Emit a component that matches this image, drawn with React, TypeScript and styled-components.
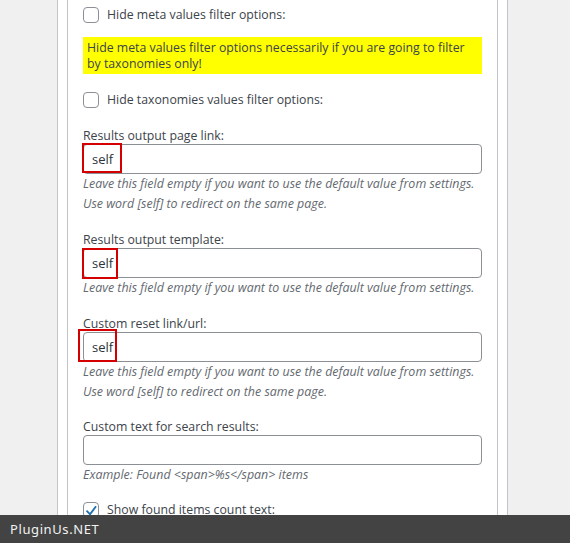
import React from "react";
import styled, { createGlobalStyle } from "styled-components";

const GlobalStyle = createGlobalStyle`
  html, body {
    margin: 0;
    padding: 0;
    background: #f0f0f1;
    overflow: hidden;
  }
  body {
    font-family: "Open Sans", "Noto Sans", sans-serif;
    color: #3c434a;
  }
`;

const Page = styled.div`
  width: 570px;
  height: 543px;
  overflow: hidden;
  position: relative;
`;

const OuterPanel = styled.div`
  margin-left: 57px;
  width: 451px;
  height: 543px;
  box-sizing: border-box;
  background: #fff;
  border-left: 1px solid #c3c4c7;
  border-right: 1px solid #c3c4c7;
  padding: 0 9px;
`;

const InnerPanel = styled.div`
  height: 100%;
  box-sizing: border-box;
  border-left: 1px solid #c3c4c7;
  border-right: 1px solid #c3c4c7;
  padding: 7px 15px 0 15px;
  display: flex;
  flex-direction: column;
`;

const CheckRow = styled.label<{ $mt?: number }>`
  display: flex;
  align-items: center;
  gap: 8px;
  height: 16px;
  margin-top: ${(p) => p.$mt ?? 0}px;
  font-size: 12.3px;
  line-height: 16px;
  color: #3c434a;
  white-space: nowrap;
`;

const Box = styled.span<{ $checked?: boolean }>`
  width: 16px;
  height: 16px;
  box-sizing: border-box;
  border: 1px solid #8c8f94;
  border-radius: 4px;
  background: #fff;
  flex: 0 0 16px;
  display: flex;
  align-items: center;
  justify-content: center;
  overflow: visible;
`;

const Note = styled.div`
  margin-top: 14px;
  background: #ffff00;
  padding: 3px 4px 2px 4px;
  font-size: 12.3px;
  line-height: 16px;
  color: #3c434a;
  white-space: nowrap;
`;

const Field = styled.div<{ $mt: number }>`
  margin-top: ${(p) => p.$mt}px;
  display: flex;
  flex-direction: column;
`;

const FieldLabel = styled.div`
  font-size: 12.3px;
  line-height: 16px;
  height: 16px;
  color: #3c434a;
  white-space: nowrap;
`;

const InputWrap = styled.div`
  position: relative;
`;

const TextInput = styled.div`
  height: 30px;
  box-sizing: border-box;
  border: 1px solid #8c8f94;
  border-radius: 4px;
  background: #fff;
  padding: 0 8px;
  font-size: 13px;
  line-height: 29px;
  color: #2c3338;
`;

const Highlight = styled.span<{ $l: number; $t: number; $w: number; $h: number }>`
  position: absolute;
  left: ${(p) => p.$l}px;
  top: ${(p) => p.$t}px;
  width: ${(p) => p.$w}px;
  height: ${(p) => p.$h}px;
  box-sizing: border-box;
  border: 2px solid #d40000;
  pointer-events: none;
`;

const Desc = styled.p`
  margin: 0;
  font-size: 12.45px;
  line-height: 20px;
  font-style: italic;
  color: #646970;
  white-space: nowrap;
`;

const Footer = styled.div`
  position: fixed;
  left: 0;
  right: 0;
  bottom: 0;
  height: 28px;
  background: #434343;
  color: #f2f2f2;
  font-family: "Noto Sans", "Open Sans", sans-serif;
  font-size: 13px;
  letter-spacing: 0.6px;
  line-height: 28px;
  padding-left: 10px;
`;

const Check = () => (
  <svg width="18" height="18" viewBox="0 0 18 18" style={{ marginLeft: 1, marginTop: 1 }}>
    <path d="M3 9.5 L7 13.5 L14.5 3.5" fill="none" stroke="#2271b1" strokeWidth="2.6" strokeLinecap="square" />
  </svg>
);

type FieldDef = {
  mt: number;
  label: string;
  value?: string;
  hl?: { l: number; t: number; w: number; h: number };
  desc: string[];
};

const fields: FieldDef[] = [
  {
    mt: 20,
    label: "Results output page link:",
    value: "self",
    hl: { l: -1, t: -1, w: 40, h: 30 },
    desc: [
      "Leave this field empty if you want to use the default value from settings.",
      "Use word [self] to redirect on the same page.",
    ],
  },
  {
    mt: 18,
    label: "Results output template:",
    value: "self",
    hl: { l: -1, t: 0, w: 36, h: 31 },
    desc: ["Leave this field empty if you want to use the default value from settings."],
  },
  {
    mt: 18,
    label: "Custom reset link/url:",
    value: "self",
    hl: { l: -5, t: -3, w: 39, h: 33 },
    desc: [
      "Leave this field empty if you want to use the default value from settings.",
      "Use word [self] to redirect on the same page.",
    ],
  },
  {
    mt: 17,
    label: "Custom text for search results:",
    value: "",
    desc: ["Example: Found <span>%s</span> items"],
  },
];

export default function App() {
  return (
    <Page>
      <GlobalStyle />
      <OuterPanel>
        <InnerPanel>
          <CheckRow>
            <Box />
            Hide meta values filter options:
          </CheckRow>
          <Note>
            Hide meta values filter options necessarily if you are going to filter
            <br />
            by taxonomies only!
          </Note>
          <CheckRow $mt={18}>
            <Box />
            Hide taxonomies values filter options:
          </CheckRow>
          {fields.map((f) => (
            <Field key={f.label} $mt={f.mt}>
              <FieldLabel>{f.label}</FieldLabel>
              <InputWrap>
                <TextInput>{f.value}</TextInput>
                {f.hl && <Highlight $l={f.hl.l} $t={f.hl.t} $w={f.hl.w} $h={f.hl.h} />}
              </InputWrap>
              {f.desc.map((d) => (
                <Desc key={d}>{d}</Desc>
              ))}
            </Field>
          ))}
          <CheckRow $mt={17}>
            <Box $checked>
              <Check />
            </Box>
            Show found items count text:
          </CheckRow>
        </InnerPanel>
      </OuterPanel>
      <Footer>PluginUs.NET</Footer>
    </Page>
  );
}
